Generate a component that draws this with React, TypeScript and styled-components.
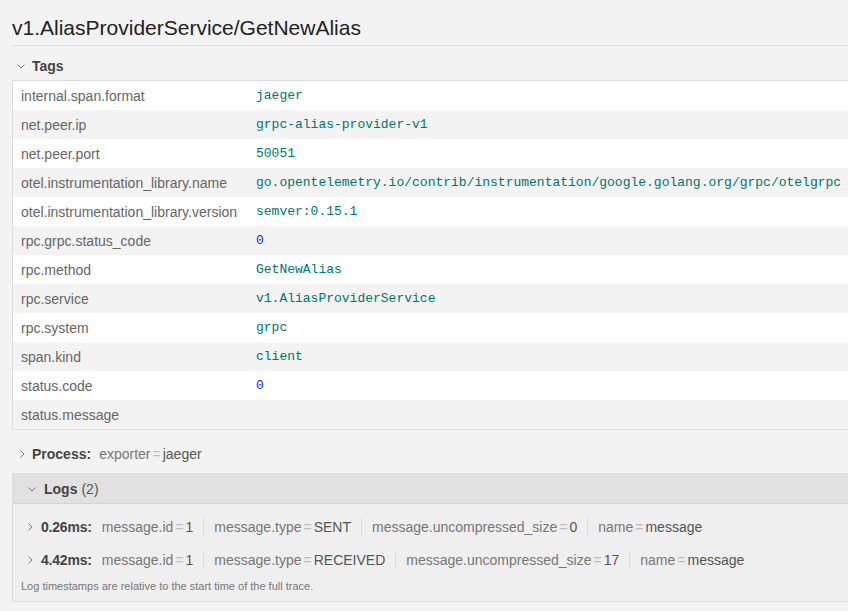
import React from 'react'
import styled, { createGlobalStyle } from 'styled-components'

const GlobalStyle = createGlobalStyle`
  * { box-sizing: border-box; }
  html, body {
    margin: 0;
    background: #f3f3f3;
    font-family: "Liberation Sans", Arial, Helvetica, sans-serif;
    color: #444;
    overflow: hidden;
  }
`

interface Tag {
  key: string
  value: string
  kind?: 'string' | 'number' | 'empty'
}

interface KV {
  key: string
  value: string
}

interface LogEntry {
  time: string
  fields: KV[]
}

const tags: Tag[] = [
  { key: 'internal.span.format', value: 'jaeger' },
  { key: 'net.peer.ip', value: 'grpc-alias-provider-v1' },
  { key: 'net.peer.port', value: '50051' },
  { key: 'otel.instrumentation_library.name', value: 'go.opentelemetry.io/contrib/instrumentation/google.golang.org/grpc/otelgrpc' },
  { key: 'otel.instrumentation_library.version', value: 'semver:0.15.1' },
  { key: 'rpc.grpc.status_code', value: '0', kind: 'number' },
  { key: 'rpc.method', value: 'GetNewAlias' },
  { key: 'rpc.service', value: 'v1.AliasProviderService' },
  { key: 'rpc.system', value: 'grpc' },
  { key: 'span.kind', value: 'client' },
  { key: 'status.code', value: '0', kind: 'number' },
  { key: 'status.message', value: '', kind: 'empty' },
]

const logs: LogEntry[] = [
  {
    time: '0.26ms:',
    fields: [
      { key: 'message.id', value: '1' },
      { key: 'message.type', value: 'SENT' },
      { key: 'message.uncompressed_size', value: '0' },
      { key: 'name', value: 'message' },
    ],
  },
  {
    time: '4.42ms:',
    fields: [
      { key: 'message.id', value: '1' },
      { key: 'message.type', value: 'RECEIVED' },
      { key: 'message.uncompressed_size', value: '17' },
      { key: 'name', value: 'message' },
    ],
  },
]

const Page = styled.div`
  padding-left: 12px;
  width: 860px;
`

const Title = styled.h1`
  margin: 0;
  padding-top: 11px;
  font-size: 21px;
  font-weight: normal;
  line-height: 34px;
  color: #222;
  border-bottom: 1px solid #ddd;
`

const SectionHeader = styled.div<{ $indent?: number }>`
  display: flex;
  align-items: center;
  height: 28px;
  padding-left: ${(p) => p.$indent ?? 5}px;
  font-size: 14px;
`

const HeaderLabel = styled.strong<{ $gap?: number }>`
  color: #444;
  font-weight: bold;
  margin-left: ${(p) => p.$gap ?? 7}px;
  margin-right: 8px;
`

const TagsHeader = styled(SectionHeader)`
  margin-top: 6px;
`

const ProcessHeader = styled(SectionHeader)`
  margin-top: 10px;
  margin-bottom: 5px;
`

const Chevron = styled.svg`
  flex: none;
  width: 8px;
  height: 8px;
  color: #777;
`

const Table = styled.div`
  border: 1px solid #ddd;
  border-right: none;
`

const Row = styled.div<{ $even: boolean }>`
  display: flex;
  align-items: center;
  height: 29px;
  background: ${(p) => (p.$even ? '#f3f3f3' : '#fff')};
`

const KeyCell = styled.div`
  width: 243px;
  padding-left: 8px;
  font-size: 14px;
  color: #666;
  white-space: nowrap;
`

const ValueCell = styled.div<{ $kind: string }>`
  font-family: "Liberation Mono", "Courier New", monospace;
  font-size: 13px;
  white-space: nowrap;
  color: ${(p) => (p.$kind === 'number' ? '#1a1aff' : '#00766c')};
`

const Summary = styled.div`
  display: flex;
  align-items: center;
  font-size: 14px;
  white-space: nowrap;
`

const SummaryItem = styled.span`
  padding: 0 10px;
  border-left: 1px solid #ddd;
  line-height: 18px;
  &:first-child {
    border-left: none;
    padding-left: 0;
  }
`

const SumKey = styled.span`
  color: #777;
`

const Eq = styled.span`
  color: #bbb;
  margin: 0 2px;
`

const SumValue = styled.span`
  color: #555;
`

const LogsBox = styled.div`
  border: 1px solid #ddd;
  border-right: none;
`

const LogsHeader = styled.div`
  display: flex;
  align-items: center;
  height: 30px;
  padding-left: 15px;
  background: #e1e1e1;
  border-bottom: 1px solid #d3d3d3;
  font-size: 14px;
`

const LogsCount = styled.span`
  color: #555;
  margin-left: 4px;
`

const LogsBody = styled.div`
  background: #efefef;
  padding: 6px 0 8px 0;
`

const LogRow = styled.div`
  display: flex;
  align-items: center;
  height: 33px;
  padding-left: 13px;
`

const LogTime = styled.strong`
  margin-left: 7px;
  margin-right: 10px;
  font-size: 14px;
  letter-spacing: -0.2px;
  color: #444;
`

const Footnote = styled.div`
  padding: 3px 0 0 8px;
  font-size: 11px;
  line-height: 14px;
  color: #777;
`

const Icon: React.FC<{ open?: boolean }> = ({ open }) => (
  <Chevron viewBox="0 0 8 8" fill="none" stroke="currentColor" strokeWidth={1}>
    {open ? <polyline points="0.5,2.5 4,6 7.5,2.5" /> : <polyline points="2.5,0.5 6,4 2.5,7.5" />}
  </Chevron>
)

const KeyValues: React.FC<{ items: KV[] }> = ({ items }) => (
  <Summary>
    {items.map((kv, i) => (
      <SummaryItem key={i}>
        <SumKey>{kv.key}</SumKey>
        <Eq>=</Eq>
        <SumValue>{kv.value}</SumValue>
      </SummaryItem>
    ))}
  </Summary>
)

const App: React.FC = () => {
  return (
    <Page>
      <GlobalStyle />
      <Title>v1.AliasProviderService/GetNewAlias</Title>

      <TagsHeader>
        <Icon open />
        <HeaderLabel>Tags</HeaderLabel>
      </TagsHeader>
      <Table>
        {tags.map((t, i) => (
          <Row key={t.key} $even={i % 2 === 1}>
            <KeyCell>{t.key}</KeyCell>
            <ValueCell $kind={t.kind ?? 'string'}>{t.value}</ValueCell>
          </Row>
        ))}
      </Table>

      <ProcessHeader $indent={6}>
        <Icon />
        <HeaderLabel $gap={6}>Process:</HeaderLabel>
        <KeyValues items={[{ key: 'exporter', value: 'jaeger' }]} />
      </ProcessHeader>

      <LogsBox>
        <LogsHeader>
          <Icon open />
          <HeaderLabel $gap={8}>Logs</HeaderLabel>
          <LogsCount style={{ marginLeft: -4 }}>(2)</LogsCount>
        </LogsHeader>
        <LogsBody>
          {logs.map((l) => (
            <LogRow key={l.time}>
              <Icon />
              <LogTime>{l.time}</LogTime>
              <KeyValues items={l.fields} />
            </LogRow>
          ))}
          <Footnote>Log timestamps are relative to the start time of the full trace.</Footnote>
        </LogsBody>
      </LogsBox>
    </Page>
  )
}

export default App
